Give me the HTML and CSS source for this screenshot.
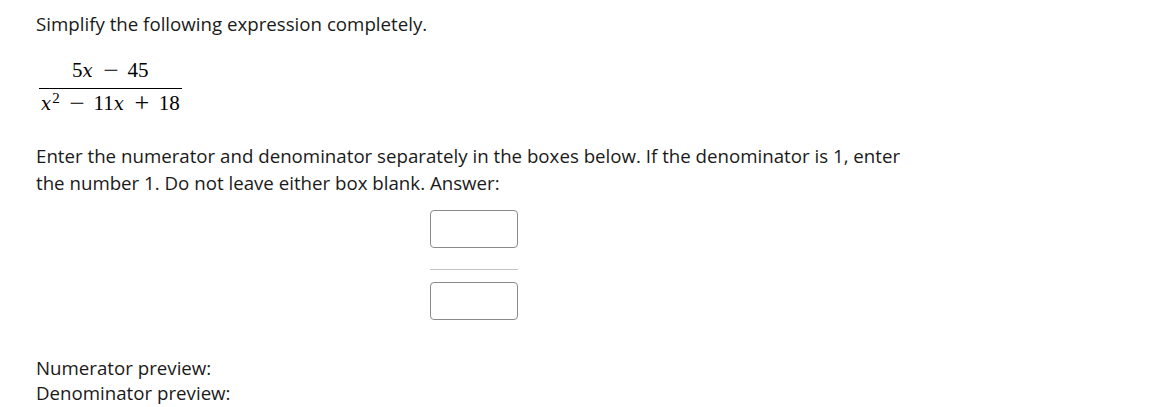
FILE: index.html
```html
<!DOCTYPE html>
<html>
<head>
<meta charset="utf-8">
<link rel="stylesheet" href="styles.css">
</head>
<body>
<div class="page">
  <p class="prompt">Simplify the following expression completely.</p>
  <div class="expr">
    <div class="frac">
      <div class="num">5<i>x</i><span class="op minus">−</span>45</div>
      <div class="den"><i>x</i><sup>2</sup><span class="op minus">−</span>11<i>x</i><span class="op plus">+</span>18</div>
    </div>
  </div>
  <p class="instr">Enter the numerator and denominator separately in the boxes below. If the denominator is 1, enter the number 1. Do not leave either box blank. Answer:</p>
  <div class="answer">
    <div class="answer-frac">
      <input class="box" type="text">
      <div class="bar"></div>
      <input class="box" type="text">
    </div>
  </div>
  <div class="previews">
    <div>Numerator preview:</div>
    <div>Denominator preview:</div>
  </div>
</div>
</body>
</html>
```
FILE: styles.css
```css
html, body { margin: 0; padding: 0; background: #fff; }
body {
  font-family: "Open Sans", "Noto Sans", sans-serif;
  font-size: 18.7px;
  color: #1a1a1a;
}
.page { padding: 10px 0 0 36px; width: 870px; }
.prompt { margin: 0; line-height: 27px; }
.expr { margin-top: 20px; padding-left: 3px; }
.frac {
  display: inline-flex;
  flex-direction: column;
  align-items: stretch;
  font-family: "Liberation Serif", "DejaVu Serif", serif;
  font-size: 21px;
  color: #000;
}
.frac i { font-family: "DejaVu Serif", serif; font-size: 18px; font-style: italic; padding-right: 1px; }
.num { text-align: center; line-height: 24px; padding-bottom: 5px; border-bottom: 1px solid #000; }
.den { text-align: center; line-height: 24px; padding: 2px 2px 0 2px; }
.den sup { font-size: 15px; line-height: 0; vertical-align: 7px; }
.op { display: inline-block; margin: 0 11px; }
.minus { transform: scaleX(1.3); }
.plus { transform: scale(1.25); }
.instr { margin: 26px 0 0 0; line-height: 27px; }
.answer { display: flex; justify-content: center; margin-top: 14px; padding-left: 6px; }
.answer-frac { display: flex; flex-direction: column; width: 88px; }
.box {
  box-sizing: border-box;
  width: 88px;
  height: 38px;
  border: 1px solid #8a8a8a;
  border-radius: 4px;
  margin: 0;
  background: #fff;
}
.bar { height: 1px; background: #c4c4c4; margin: 21px 0 12px 0; }
.previews { margin-top: 35px; line-height: 25px; }
```
